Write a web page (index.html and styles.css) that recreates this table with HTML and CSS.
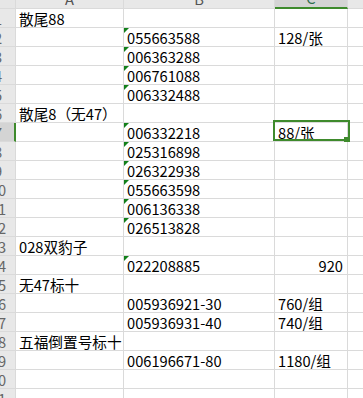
FILE: index.html
```html
<!DOCTYPE html>
<html>
<head>
<meta charset="utf-8">
<link rel="stylesheet" href="styles.css">
</head>
<body>
<div class="sheet">
  <div class="grid">
    <div class="corner"></div>
    <div class="colhead"><span>A</span></div>
    <div class="colhead"><span>B</span></div>
    <div class="colhead sel"><span>C</span></div>
    <div class="colhead"><span>D</span></div>

    <div class="rowhead"><span>1</span></div><div class="cell">散尾88</div><div class="cell"></div><div class="cell"></div><div class="cell"></div>
    <div class="rowhead"><span>2</span></div><div class="cell"></div><div class="cell txt">055663588</div><div class="cell">128/张</div><div class="cell"></div>
    <div class="rowhead"><span>3</span></div><div class="cell"></div><div class="cell txt">006363288</div><div class="cell"></div><div class="cell"></div>
    <div class="rowhead"><span>4</span></div><div class="cell"></div><div class="cell txt">006761088</div><div class="cell"></div><div class="cell"></div>
    <div class="rowhead"><span>5</span></div><div class="cell"></div><div class="cell txt">006332488</div><div class="cell"></div><div class="cell"></div>
    <div class="rowhead"><span>6</span></div><div class="cell">散尾8（无47）</div><div class="cell"></div><div class="cell"></div><div class="cell"></div>
    <div class="rowhead sel"><span>7</span></div><div class="cell"></div><div class="cell txt">006332218</div><div class="cell">88/张</div><div class="cell"></div>
    <div class="rowhead"><span>8</span></div><div class="cell"></div><div class="cell txt">025316898</div><div class="cell"></div><div class="cell"></div>
    <div class="rowhead"><span>9</span></div><div class="cell"></div><div class="cell txt">026322938</div><div class="cell"></div><div class="cell"></div>
    <div class="rowhead"><span>10</span></div><div class="cell"></div><div class="cell txt">055663598</div><div class="cell"></div><div class="cell"></div>
    <div class="rowhead"><span>11</span></div><div class="cell"></div><div class="cell txt">006136338</div><div class="cell"></div><div class="cell"></div>
    <div class="rowhead"><span>12</span></div><div class="cell"></div><div class="cell txt">026513828</div><div class="cell"></div><div class="cell"></div>
    <div class="rowhead"><span>13</span></div><div class="cell">028双豹子</div><div class="cell"></div><div class="cell"></div><div class="cell"></div>
    <div class="rowhead"><span>14</span></div><div class="cell"></div><div class="cell txt">022208885</div><div class="cell num">920</div><div class="cell"></div>
    <div class="rowhead"><span>15</span></div><div class="cell">无47标十</div><div class="cell"></div><div class="cell"></div><div class="cell"></div>
    <div class="rowhead"><span>16</span></div><div class="cell"></div><div class="cell">005936921-30</div><div class="cell">760/组</div><div class="cell"></div>
    <div class="rowhead"><span>17</span></div><div class="cell"></div><div class="cell">005936931-40</div><div class="cell">740/组</div><div class="cell"></div>
    <div class="rowhead"><span>18</span></div><div class="cell">五福倒置号标十</div><div class="cell"></div><div class="cell"></div><div class="cell"></div>
    <div class="rowhead"><span>19</span></div><div class="cell"></div><div class="cell">006196671-80</div><div class="cell">1180/组</div><div class="cell"></div>
    <div class="rowhead"><span>20</span></div><div class="cell"></div><div class="cell"></div><div class="cell"></div><div class="cell"></div>
    <div class="rowhead"><span>21</span></div><div class="cell"></div><div class="cell"></div><div class="cell"></div><div class="cell"></div>
  </div>
  <div class="selection"><div class="handle"></div></div>
</div>
</body>
</html>
```

FILE: styles.css
```css
html, body {
  margin: 0;
  padding: 0;
  background: #ffffff;
}
.sheet {
  position: relative;
  width: 363px;
  height: 398px;
  overflow: hidden;
  font-family: "Noto Sans CJK SC", "Noto Sans", sans-serif;
  font-size: 14.67px;
  color: #000;
}
.grid {
  display: grid;
  grid-template-columns: 16px 108px 151px 73px 73px;
  grid-template-rows: 9px repeat(21, 19px);
}
.corner,
.colhead,
.rowhead,
.cell {
  box-sizing: border-box;
  border-right: 1px solid #dadada;
  border-bottom: 1px solid #dadada;
  overflow: hidden;
  white-space: nowrap;
}
.corner {
  background: #e6e6e6;
}
.colhead {
  background: #e8e8e8;
  display: flex;
  justify-content: center;
  align-items: flex-end;
  color: #555;
}
.colhead span {
  line-height: 19px;
  flex: none;
}
.colhead.sel {
  background: #d4d4d4;
  border-bottom: 2px solid #3e8a2c;
  color: #2d6e4e;
}
.rowhead {
  background: #e8e8e8;
  color: #666;
  display: flex;
  line-height: 18px;
  padding-top: 1px;
}
.rowhead span {
  flex: none;
  width: 30px;
  margin-left: -17px;
  text-align: center;
}
.rowhead.sel {
  background: #d4d4d4;
  border-right: 2px solid #3e8a2c;
}
.cell {
  position: relative;
  padding: 1px 3px 0 3px;
  line-height: 18px;
}
.cell.txt::before {
  content: "";
  position: absolute;
  left: 0;
  top: 0;
  border-top: 5px solid #12801a;
  border-right: 5px solid transparent;
}
.cell.num {
  text-align: right;
  padding-right: 4px;
}
.selection {
  position: absolute;
  left: 273px;
  top: 120px;
  width: 77px;
  height: 21px;
  box-sizing: border-box;
  border: 2px solid #3e8a2c;
}
.handle {
  position: absolute;
  right: -2px;
  bottom: -3px;
  width: 6px;
  height: 5px;
  background: #3e8a2c;
}
```
